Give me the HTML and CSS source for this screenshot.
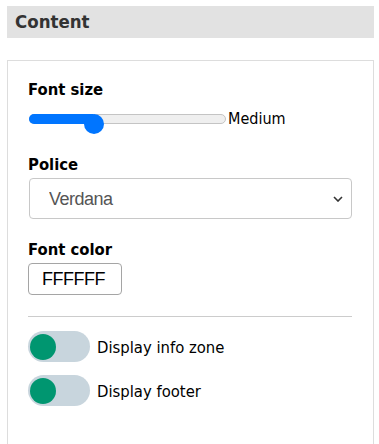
FILE: index.html
```html
<!DOCTYPE html>
<html lang="en">
<head>
  <meta charset="UTF-8" />
  <meta name="viewport" content="width=device-width, initial-scale=1.0"/>
  <title>Content settings</title>
  <link rel="stylesheet" href="styles.css">
</head>
<body>

  <h2 class="section-title">Content</h2>

  <div class="panel">
    <label class="field-label">Font size</label>
    <div class="slider-row">
      <div class="slider-track">
        <div class="slider-fill" style="width: 33%;"></div>
        <div class="slider-thumb" style="left: 54px;"></div>
      </div>
      <span class="slider-value">Medium</span>
    </div>

    <label class="field-label police-label" for="police">Police</label>
    <div class="select-wrap">
      <select id="police" class="select">
        <option>Verdana</option>
        <option>Arial</option>
        <option>Georgia</option>
      </select>
      <svg class="chevron" width="10" height="6" viewBox="0 0 10 6">
        <path d="M1 1 L5 5 L9 1" fill="none" stroke="#333" stroke-width="1.6"/>
      </svg>
    </div>

    <label class="field-label color-label" for="color">Font color</label>
    <input id="color" class="color-input" type="text" value="FFFFFF" />

    <hr class="divider" />

    <div class="toggle-row">
      <span class="toggle"><span class="knob"></span></span>
      <span class="toggle-text">Display info zone</span>
    </div>
    <div class="toggle-row">
      <span class="toggle"><span class="knob"></span></span>
      <span class="toggle-text">Display footer</span>
    </div>
  </div>

</body>
</html>
```

FILE: styles.css
```css
body {
  margin: 6px 5px 0 7px;
  font-family: "DejaVu Sans Condensed", "DejaVu Sans", Verdana, sans-serif;
  color: #000;
  background: #fff;
}

.section-title {
  margin: 0;
  height: 32px;
  line-height: 32px;
  padding-left: 8px;
  background: #e2e2e2;
  color: #333;
  font-size: 18.5px;
  font-weight: bold;
}

.panel {
  margin-top: 22px;
  border: 1px solid #dddddd;
  padding: 19px 21px 80px 20px;
}

.field-label {
  display: block;
  font-size: 16.5px;
  font-weight: bold;
  line-height: 20px;
}

.slider-row {
  display: flex;
  align-items: center;
  height: 20px;
  margin-top: 9px;
}

.slider-track {
  position: relative;
  width: 197px;
  height: 10px;
  box-sizing: border-box;
  border: 1px solid #c4c4c4;
  border-radius: 5px;
  background: #efefef;
  margin-left: 1px;
}

.slider-fill {
  position: absolute;
  left: -1px;
  top: -1px;
  bottom: -1px;
  background: #0075ff;
  border-radius: 5px 0 0 5px;
}

.slider-thumb {
  position: absolute;
  top: -1px;
  width: 20px;
  height: 20px;
  border-radius: 50%;
  background: #0075ff;
}

.slider-value {
  margin-left: 2px;
  font-size: 16px;
  line-height: 20px;
}

.police-label {
  margin-top: 26px;
}

.select-wrap {
  position: relative;
  margin-top: 3px;
  margin-left: 1px;
}

.select {
  appearance: none;
  -webkit-appearance: none;
  display: block;
  width: 100%;
  height: 41px;
  box-sizing: border-box;
  border: 1px solid #c8c8c8;
  border-radius: 4px;
  background: #fff;
  padding: 0 0 0 19px;
  font-family: "Liberation Sans", Arial, sans-serif;
  font-size: 18px;
  letter-spacing: -0.5px;
  color: #555;
}

.chevron {
  position: absolute;
  right: 9px;
  top: 18px;
}

.color-label {
  margin-top: 21px;
}

.color-input {
  display: block;
  margin-top: 3px;
  width: 94px;
  height: 32px;
  box-sizing: border-box;
  border: 1px solid #a5a5a5;
  border-radius: 4px;
  padding: 0 0 0 13px;
  font-family: "Liberation Sans", Arial, sans-serif;
  font-size: 18px;
  letter-spacing: -0.5px;
  color: #000;
}

.divider {
  margin: 21px 0 14px;
  border: none;
  border-top: 1px solid #cccccc;
}

.toggle-row {
  display: flex;
  align-items: center;
  gap: 7px;
  margin-bottom: 13px;
}

.toggle {
  position: relative;
  display: inline-block;
  width: 62px;
  height: 31px;
  border-radius: 16px;
  background: #c8d5dd;
}

.knob {
  position: absolute;
  left: 2px;
  top: 2.5px;
  width: 26px;
  height: 26px;
  border-radius: 50%;
  background: #009670;
}

.toggle-text {
  font-size: 16.5px;
  line-height: 20px;
  padding-top: 2px;
}
```
